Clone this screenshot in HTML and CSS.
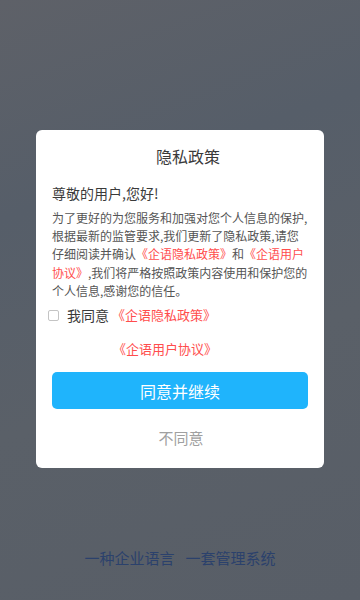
FILE: index.html
```html
<!DOCTYPE html>
<html lang="zh-CN">
<head>
<meta charset="utf-8">
<link rel="stylesheet" href="styles.css">
</head>
<body>
<div class="screen">
  <div class="dialog">
    <div class="title">隐私政策</div>
    <div class="greeting">尊敬的用户,您好!</div>
    <p class="body">为了更好的为您服务和加强对您个人信息的保护,根据最新的监管要求,我们更新了隐私政策,请您仔细阅读并确认<span class="link">《企语隐私政策》</span>和<span class="link">《企语用户协议》</span>,我们将严格按照政策内容使用和保护您的个人信息,感谢您的信任。</p>
    <div class="agree">
      <span class="check"></span>
      <span class="agree-text">我同意</span><span class="link agree-link">《企语隐私政策》</span>
    </div>
    <div class="link-row"><span class="link">《企语用户协议》</span></div>
    <div class="btn">同意并继续</div>
    <div class="refuse">不同意</div>
  </div>
  <div class="footer"><span>一种企业语言</span><span>一套管理系统</span></div>
</div>
</body>
</html>
```
FILE: styles.css
```css
html, body {
  margin: 0;
  padding: 0;
}
body {
  font-family: "Noto Sans CJK SC", "Noto Sans", sans-serif;
  background: #585f69;
}
.screen {
  height: 600px;
  display: flex;
  flex-direction: column;
  background: linear-gradient(160deg, #5e6168 0%, #565e69 30%, #5a6068 60%, #585e67 100%);
}
.dialog {
  margin: 130px 36px 0;
  height: 338px;
  box-sizing: border-box;
  background: #fff;
  border-radius: 6px;
  padding: 0 14px 0 16px;
  display: flex;
  flex-direction: column;
}
.title {
  height: 53px;
  line-height: 53px;
  font-size: 16px;
  color: #3a3a3a;
  text-align: center;
  padding-left: 14px;
}
.greeting {
  font-size: 14px;
  line-height: 20px;
  color: #3a3a3a;
}
.body {
  margin: 6px 0 0;
  font-size: 12px;
  line-height: 18.2px;
  color: #555;
}
.link {
  color: #ff4d4d;
}
.agree {
  margin: 5px 0 0 -4px;
  display: flex;
  align-items: center;
  height: 20px;
}
.check {
  width: 9px;
  height: 9px;
  border: 1px solid #c4c4c4;
  border-radius: 2px;
  margin-right: 8px;
}
.agree-text {
  font-size: 14px;
  color: #3a3a3a;
  line-height: 20px;
}
.agree-link {
  font-size: 13px;
  line-height: 20px;
  margin-left: 3px;
}
.link-row {
  margin-top: 14px;
  height: 20px;
  line-height: 20px;
  font-size: 13px;
  padding-left: 61px;
}
.btn {
  margin-top: 13px;
  height: 37px;
  border-radius: 5px;
  background: #1fb4fc;
  color: #fff;
  font-size: 16px;
  display: flex;
  align-items: center;
  justify-content: center;
  margin-right: 2px;
}
.refuse {
  margin-top: 19px;
  line-height: 20px;
  font-size: 15px;
  color: #a0a0a0;
  text-align: center;
}
.footer {
  margin-top: auto;
  margin-bottom: 32px;
  display: flex;
  justify-content: center;
  gap: 11px;
  font-size: 15px;
  line-height: 20px;
  color: #2b416c;
}
```
